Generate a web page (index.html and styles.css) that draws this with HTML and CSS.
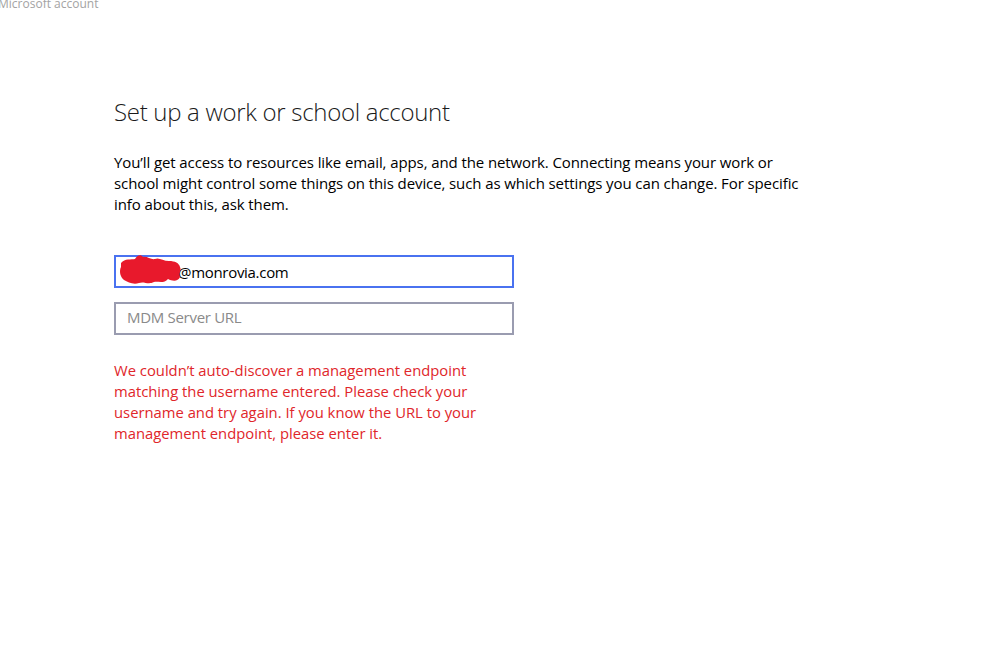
FILE: index.html
```html
<!DOCTYPE html>
<html lang="en">
<head>
    <meta charset="UTF-8">
    <title>Microsoft account</title>
    <link rel="stylesheet" href="styles.css">
</head>
<body>
    <div class="window-title">Microsoft account</div>

    <main class="page">
        <h1>Set up a work or school account</h1>
        <p class="intro">You’ll get access to resources like email, apps, and the network. Connecting means your work or<br>school might control some things on this device, such as which settings you can change. For specific<br>info about this, ask them.</p>

        <div class="field active">
            <svg class="scribble" width="66" height="34" viewBox="0 0 66 34">
                <path d="M4 10 C8 5 14 7 18 6 C20 2 24 1 26 4 C30 3 34 7 38 6 C42 4 46 8 52 8 C58 8 62 10 63 14 C65 18 61 20 63 24 C61 29 55 28 51 26 C47 31 41 28 37 29 C31 32 27 28 22 30 C16 32 11 29 7 27 C3 24 2 18 4 14 Z" fill="#e8192c"/>
            </svg>
            <span class="value">@monrovia.com</span>
        </div>
        <div class="field">
            <span class="placeholder">MDM Server URL</span>
        </div>

        <p class="error">We couldn’t auto-discover a management endpoint matching the username entered. Please check your username and try again. If you know the URL to your management endpoint, please enter it.</p>
    </main>
</body>
</html>
```

FILE: styles.css
```css
* {
    margin: 0;
    padding: 0;
    box-sizing: border-box;
}

body {
    background-color: #ffffff;
    font-family: 'Open Sans', 'Noto Sans', sans-serif;
    color: #000000;
    overflow: hidden;
}

.window-title {
    font-size: 12px;
    color: #a3a3a3;
    line-height: 12px;
    margin-left: -2px;
    margin-top: -2px;
}

.page {
    padding-left: 114px;
    padding-top: 86px;
}

h1 {
    font-weight: 300;
    font-size: 24px;
    color: #1a1a1a;
    line-height: 32px;
    letter-spacing: -0.3px;
}

.intro {
    width: 740px;
    margin-top: 24px;
    font-size: 15px;
    line-height: 21px;
    letter-spacing: -0.1px;
}

.field {
    width: 400px;
    height: 33px;
    border: 2px solid #9a9cb0;
    display: flex;
    align-items: center;
    padding-left: 11px;
    margin-top: 14px;
    position: relative;
    font-size: 15px;
}

.field.active {
    border-color: #4a72f0;
    margin-top: 40px;
    padding-left: 62px;
}

.scribble {
    position: absolute;
    left: 1px;
    top: -4px;
}

.value {
    color: #000000;
    letter-spacing: -0.3px;
}

.placeholder {
    color: #8a8a8a;
    letter-spacing: -0.3px;
    margin-top: -3px;
}

.error {
    width: 390px;
    margin-top: 25px;
    font-size: 14.8px;
    line-height: 21px;
    color: #e0262a;
}
```
